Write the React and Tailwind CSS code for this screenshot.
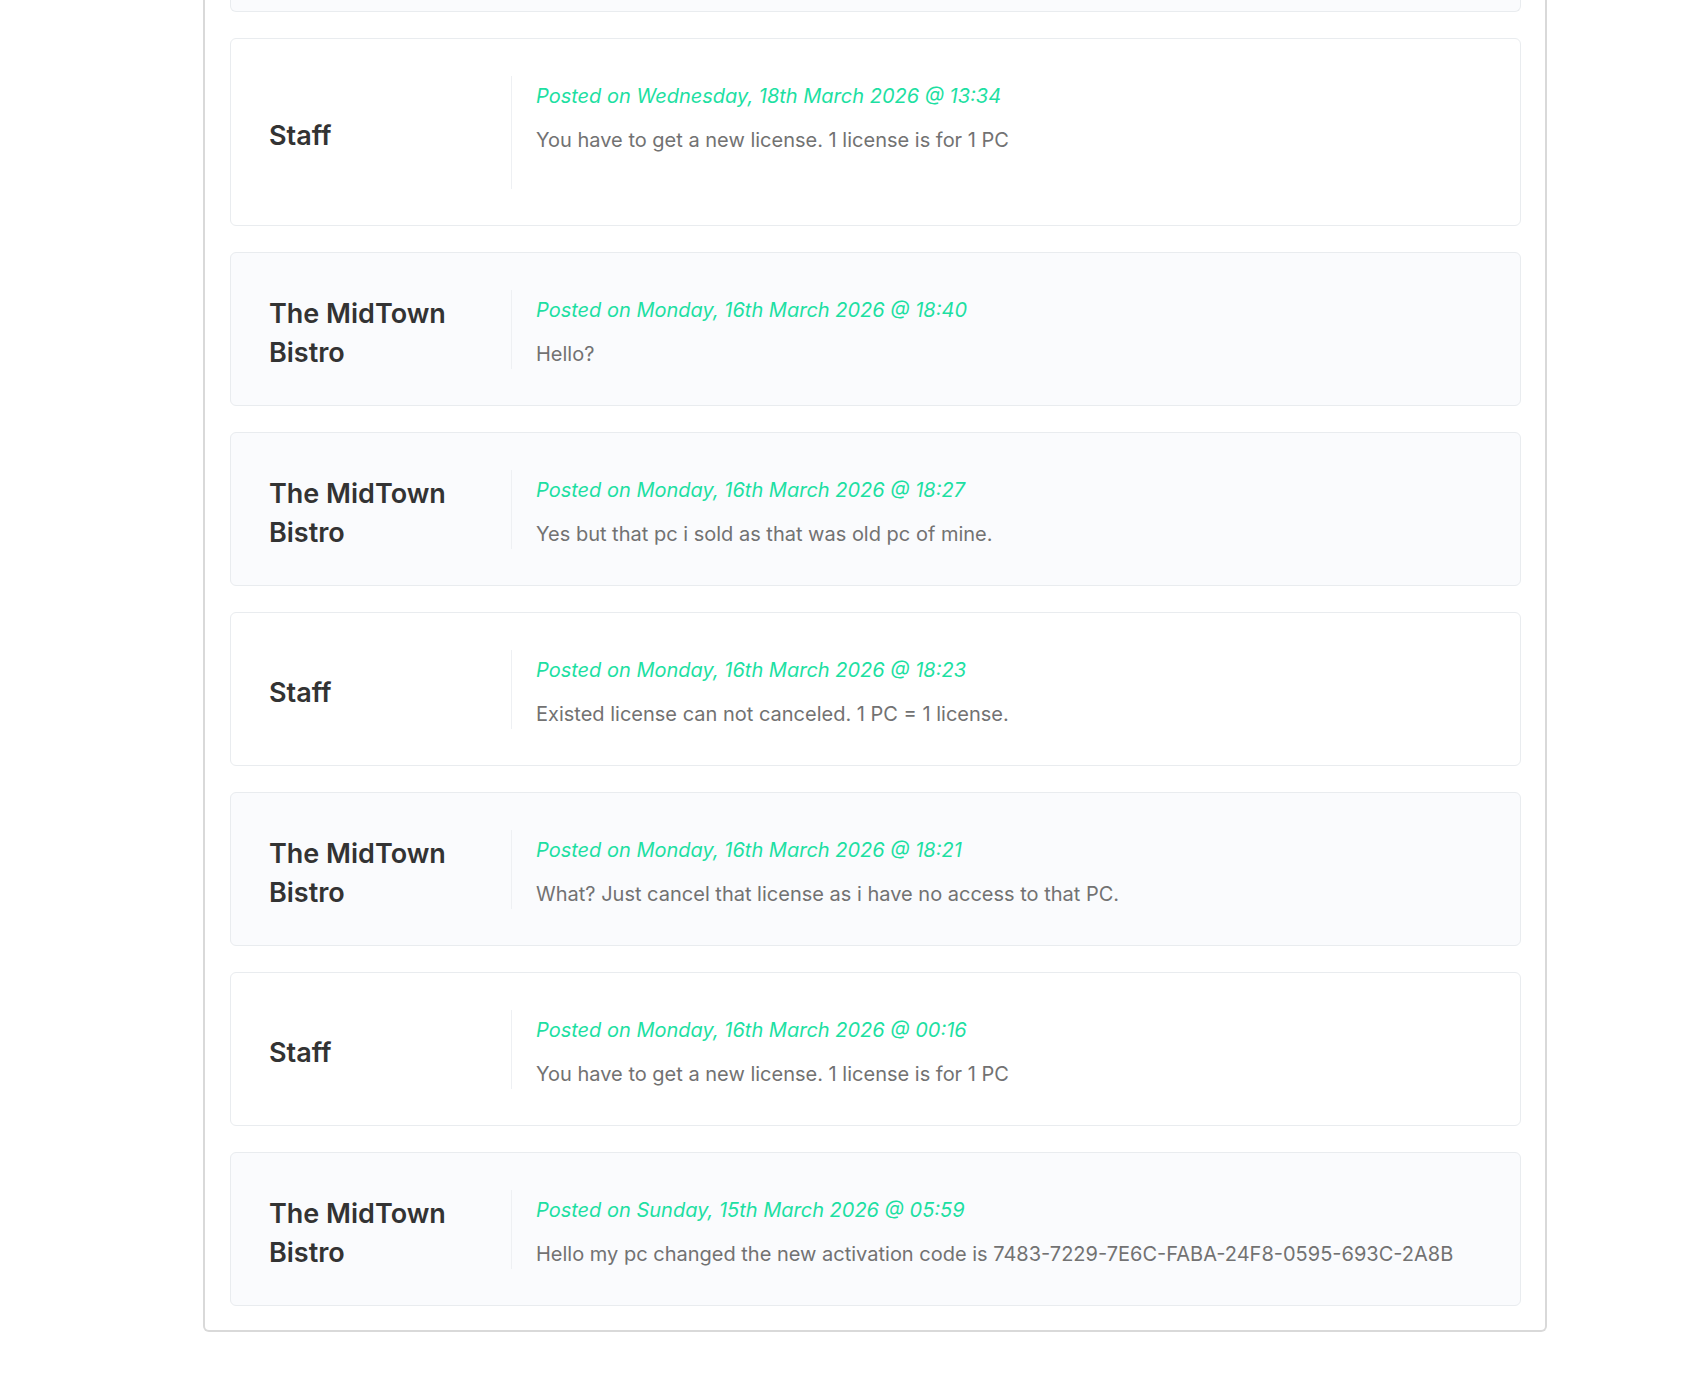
const replies = [
  {
    author: 'Staff',
    staff: true,
    date: 'Wednesday, 18th March 2026 @ 13:34',
    message: 'You have to get a new license. 1 license is for 1 PC',
    trailingBlank: true,
  },
  {
    author: 'The MidTown Bistro',
    date: 'Monday, 16th March 2026 @ 18:40',
    message: 'Hello?',
  },
  {
    author: 'The MidTown Bistro',
    date: 'Monday, 16th March 2026 @ 18:27',
    message: 'Yes but that pc i sold as that was old pc of mine.',
  },
  {
    author: 'Staff',
    staff: true,
    date: 'Monday, 16th March 2026 @ 18:23',
    message: 'Existed license can not canceled. 1 PC = 1 license.',
  },
  {
    author: 'The MidTown Bistro',
    date: 'Monday, 16th March 2026 @ 18:21',
    message: 'What? Just cancel that license as i have no access to that PC.',
  },
  {
    author: 'Staff',
    staff: true,
    date: 'Monday, 16th March 2026 @ 00:16',
    message: 'You have to get a new license. 1 license is for 1 PC',
  },
  {
    author: 'The MidTown Bistro',
    date: 'Sunday, 15th March 2026 @ 05:59',
    message: 'Hello my pc changed the new activation code is 7483-7229-7E6C-FABA-24F8-0595-693C-2A8B',
  },
];

function Reply({ reply }) {
  return (
    <div
      className={
        'flex items-center rounded-md border border-[#e9ecef] pt-[37px] pb-[36px] pl-[38px] pr-6 ' +
        (reply.staff ? 'bg-white' : 'bg-[#fafbfd]')
      }
    >
      <div className="mt-[3px] mb-[-3px] w-[242px] shrink-0 pr-6">
        <h4 className="text-[27px] font-semibold leading-[39px] text-[#333]">{reply.author}</h4>
      </div>
      <div className="flex-1 border-l border-[#eef0f3] pl-[24px] pt-[5px]">
        <p className="mb-[14px] text-[20px] italic leading-[30px] text-[#1ddfa2]">
          Posted on {reply.date}
        </p>
        <p className="text-[20px] leading-[30px] text-[#727272]">{reply.message}</p>
        {reply.trailingBlank && <div className="h-[34px]" />}
      </div>
    </div>
  );
}

export default function App() {
  return (
    <div className="min-h-screen bg-white font-['Inter',sans-serif]">
      <div className="ml-[203px] w-[1344px] rounded-b-md border-x-2 border-b-2 border-[#d9d9d9] pl-[25px] pr-[24px] pb-6">
        <div className="flex flex-col gap-[26px]">
          <div className="h-[12px] rounded-b-md border-x border-b border-[#e9ecef] bg-[#fafbfd]" />
          {replies.map((reply, i) => (
            <Reply key={i} reply={reply} />
          ))}
        </div>
      </div>
    </div>
  );
}
